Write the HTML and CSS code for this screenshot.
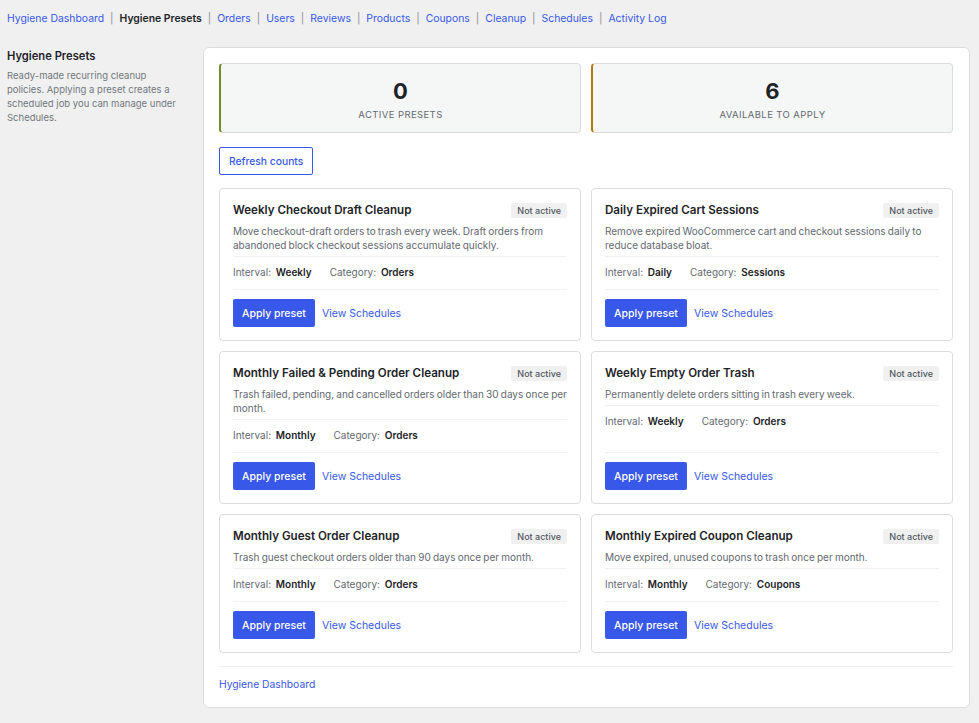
FILE: index.html
```html
<!DOCTYPE html>
<html lang="en">
<head>
  <meta charset="UTF-8">
  <title>Hygiene Presets</title>
  <link rel="stylesheet" href="styles.css">
</head>
<body>
  <nav class="subnav">
    <a href="#">Hygiene Dashboard</a><span class="sep">|</span>
    <a href="#" class="current">Hygiene Presets</a><span class="sep">|</span>
    <a href="#">Orders</a><span class="sep">|</span>
    <a href="#">Users</a><span class="sep">|</span>
    <a href="#">Reviews</a><span class="sep">|</span>
    <a href="#">Products</a><span class="sep">|</span>
    <a href="#">Coupons</a><span class="sep">|</span>
    <a href="#">Cleanup</a><span class="sep">|</span>
    <a href="#">Schedules</a><span class="sep">|</span>
    <a href="#">Activity Log</a>
  </nav>

  <div class="layout">
    <aside class="sidebar">
      <h2>Hygiene Presets</h2>
      <p>Ready-made recurring cleanup policies. Applying a preset creates a scheduled job you can manage under Schedules.</p>
    </aside>

    <main class="panel">
      <div class="stats">
        <div class="stat stat-active">
          <div class="stat-num">0</div>
          <div class="stat-label">Active presets</div>
        </div>
        <div class="stat stat-available">
          <div class="stat-num">6</div>
          <div class="stat-label">Available to apply</div>
        </div>
      </div>

      <button class="btn-outline">Refresh counts</button>

      <div class="grid">
        <div class="preset">
          <div class="preset-head">
            <h3>Weekly Checkout Draft Cleanup</h3>
            <span class="badge">Not active</span>
          </div>
          <p class="desc">Move checkout-draft orders to trash every week. Draft orders from abandoned block checkout sessions accumulate quickly.</p>
          <div class="meta"><span class="k">Interval:</span> <b>Weekly</b><span class="k cat">Category:</span> <b>Orders</b></div>
          <div class="actions"><button class="btn-primary">Apply preset</button><a href="#">View Schedules</a></div>
        </div>

        <div class="preset">
          <div class="preset-head">
            <h3>Daily Expired Cart Sessions</h3>
            <span class="badge">Not active</span>
          </div>
          <p class="desc">Remove expired WooCommerce cart and checkout sessions daily to reduce database bloat.</p>
          <div class="meta"><span class="k">Interval:</span> <b>Daily</b><span class="k cat">Category:</span> <b>Sessions</b></div>
          <div class="actions"><button class="btn-primary">Apply preset</button><a href="#">View Schedules</a></div>
        </div>

        <div class="preset">
          <div class="preset-head">
            <h3>Monthly Failed &amp; Pending Order Cleanup</h3>
            <span class="badge">Not active</span>
          </div>
          <p class="desc">Trash failed, pending, and cancelled orders older than 30 days once per month.</p>
          <div class="meta"><span class="k">Interval:</span> <b>Monthly</b><span class="k cat">Category:</span> <b>Orders</b></div>
          <div class="actions"><button class="btn-primary">Apply preset</button><a href="#">View Schedules</a></div>
        </div>

        <div class="preset">
          <div class="preset-head">
            <h3>Weekly Empty Order Trash</h3>
            <span class="badge">Not active</span>
          </div>
          <p class="desc">Permanently delete orders sitting in trash every week.</p>
          <div class="meta"><span class="k">Interval:</span> <b>Weekly</b><span class="k cat">Category:</span> <b>Orders</b></div>
          <div class="actions"><button class="btn-primary">Apply preset</button><a href="#">View Schedules</a></div>
        </div>

        <div class="preset">
          <div class="preset-head">
            <h3>Monthly Guest Order Cleanup</h3>
            <span class="badge">Not active</span>
          </div>
          <p class="desc">Trash guest checkout orders older than 90 days once per month.</p>
          <div class="meta"><span class="k">Interval:</span> <b>Monthly</b><span class="k cat">Category:</span> <b>Orders</b></div>
          <div class="actions"><button class="btn-primary">Apply preset</button><a href="#">View Schedules</a></div>
        </div>

        <div class="preset">
          <div class="preset-head">
            <h3>Monthly Expired Coupon Cleanup</h3>
            <span class="badge">Not active</span>
          </div>
          <p class="desc">Move expired, unused coupons to trash once per month.</p>
          <div class="meta"><span class="k">Interval:</span> <b>Monthly</b><span class="k cat">Category:</span> <b>Coupons</b></div>
          <div class="actions"><button class="btn-primary">Apply preset</button><a href="#">View Schedules</a></div>
        </div>
      </div>

      <div class="panel-foot">
        <a href="#">Hygiene Dashboard</a>
      </div>
    </main>
  </div>
</body>
</html>
```

FILE: styles.css
```css
* {
  box-sizing: border-box;
}

body {
  margin: 0;
  padding: 0 9px 0 7px;
  background: #f0f0f1;
  font-family: Inter, "Noto Sans", sans-serif;
  color: #1d2327;
  font-size: 10px;
}

a {
  color: #3858e9;
  text-decoration: none;
}

.subnav {
  display: flex;
  align-items: center;
  height: 36px;
  font-size: 10.4px;
}

.subnav .sep {
  color: #8c8f94;
  margin: 0 6px;
}

.subnav .current {
  color: #1d2327;
  font-weight: 600;
}

.layout {
  display: flex;
  gap: 24px;
  margin-top: 11px;
}

.sidebar {
  width: 172px;
  flex-shrink: 0;
}

.sidebar h2 {
  font-size: 11.2px;
  font-weight: 600;
  margin: 2px 0 6px;
}

.sidebar p {
  margin: 0;
  font-size: 9.5px;
  color: #72777c;
  line-height: 14px;
}

.panel {
  flex: 1;
  background: #fff;
  border: 1px solid #dcdcde;
  border-radius: 6px;
  padding: 15px 16px 16px 15px;
}

.stats {
  display: grid;
  grid-template-columns: 1fr 1fr;
  gap: 10px;
}

.stat {
  height: 70px;
  background: #f5f6f6;
  border: 1px solid #dcdcde;
  border-radius: 4px;
  text-align: center;
  padding-top: 14px;
}

.stat-active {
  border-left: 2px solid #6f8f22;
}

.stat-available {
  border-left: 2px solid #b27d0e;
}

.stat-num {
  font-size: 22px;
  font-weight: 700;
  line-height: 26px;
}

.stat-label {
  margin-top: 5px;
  font-size: 9.5px;
  letter-spacing: 0.4px;
  text-transform: uppercase;
  color: #646970;
}

.btn-outline {
  margin-top: 14px;
  height: 28px;
  padding: 0 9px;
  background: #fff;
  border: 1px solid #3858e9;
  border-radius: 2px;
  color: #3858e9;
  font-family: inherit;
  font-size: 10.3px;
  font-weight: 500;
}

.grid {
  display: grid;
  grid-template-columns: 1fr 1fr;
  gap: 10px;
  margin-top: 13px;
}

.preset {
  display: flex;
  flex-direction: column;
  border: 1px solid #dcdcde;
  border-radius: 4px;
  padding: 13px 13px 13px;
}

.preset-head {
  display: flex;
  justify-content: space-between;
  align-items: center;
  height: 16px;
}

.preset-head h3 {
  margin: 0;
  font-size: 11.6px;
  font-weight: 600;
}

.badge {
  background: #f0f0f1;
  color: #50575e;
  font-size: 9px;
  font-weight: 500;
  padding: 2px 6px;
  border-radius: 2px;
}

.desc {
  margin: 6px 0 0;
  padding-bottom: 4px;
  border-bottom: 1px solid #f0f0f1;
  color: #646970;
  line-height: 14px;
  word-spacing: -0.6px;
}

.meta {
  flex: 1;
  padding: 8px 0 10px;
  line-height: 14px;
  color: #646970;
  border-bottom: 1px solid #f0f0f1;
}

.meta b {
  color: #1d2327;
  font-weight: 600;
  margin-left: 2px;
}

.meta .cat {
  margin-left: 18px;
}

.actions {
  display: flex;
  align-items: center;
  gap: 7px;
  padding-top: 9px;
  font-size: 10.5px;
}

.btn-primary {
  height: 28px;
  padding: 0 9px;
  background: #3858e9;
  border: none;
  border-radius: 2px;
  color: #fff;
  font-family: inherit;
  font-size: 10.5px;
  font-weight: 500;
}

.panel-foot {
  margin-top: 13px;
  border-top: 1px solid #f0f0f1;
  padding-top: 10px;
  line-height: 14px;
  font-size: 10.3px;
}
```
